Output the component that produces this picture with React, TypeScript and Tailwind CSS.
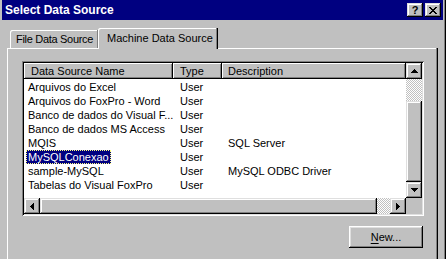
import React from "react";

const rows: [string, string, string][] = [
  ["Arquivos do Excel", "User", ""],
  ["Arquivos do FoxPro - Word", "User", ""],
  ["Banco de dados do Visual F...", "User", ""],
  ["Banco de dados MS Access", "User", ""],
  ["MQIS", "User", "SQL Server"],
  ["MySQLConexao", "User", ""],
  ["sample-MySQL", "User", "MySQL ODBC Driver"],
  ["Tabelas do Visual FoxPro", "User", ""],
];

// pixel triangles, drawn as rows of rects
const Arrow = ({ dir }: { dir: "up" | "down" | "left" | "right" }) => {
  const vertical = dir === "up" || dir === "down";
  const rects = [0, 1, 2, 3].map((i) => {
    const step = dir === "up" || dir === "left" ? i : 3 - i;
    const len = step * 2 + 1;
    const off = 3 - step;
    return vertical ? (
      <rect key={i} x={off} y={i} width={len} height={1} />
    ) : (
      <rect key={i} x={i} y={off} width={1} height={len} />
    );
  });
  return (
    <svg width={vertical ? 7 : 4} height={vertical ? 4 : 7} shapeRendering="crispEdges" fill="#000">
      {rects}
    </svg>
  );
};

const CloseGlyph = () => {
  const pattern = ["xx....xx", ".xx..xx.", "..xxxx..", "...xx...", "..xxxx..", ".xx..xx.", "xx....xx"];
  return (
    <svg width={8} height={7} shapeRendering="crispEdges" fill="#000">
      {pattern.flatMap((line, y) =>
        line.split("").map((c, x) => (c === "x" ? <rect key={`${x}-${y}`} x={x} y={y} width={1} height={1} /> : null))
      )}
    </svg>
  );
};

const ScrollBtn = ({ dir }: { dir: "up" | "down" | "left" | "right" }) => (
  <div className="w-[16px] h-[16px] flex-none flex items-center justify-center bg-[#c0c0c0] shadow-[inset_-1px_-1px_#000,inset_1px_1px_#dfdfdf,inset_-2px_-2px_#808080,inset_2px_2px_#fff]">
    <Arrow dir={dir} />
  </div>
);

export default function App() {
  return (
    <div className="w-[446px] h-[259px] bg-[#c0c0c0] flex overflow-hidden font-['Liberation_Sans',Arial,sans-serif] text-[11px] text-black select-none">
      <div className="flex-1 pl-[2px] flex flex-col">
        {/* title bar */}
        <div className="h-[20px] flex-none bg-[#000080] flex items-center pl-[3px] pr-[2px]">
          <span className="text-white font-bold text-[12px] leading-none">Select Data Source</span>
          <div className="ml-auto w-[16px] h-[14px] flex items-center justify-center bg-[#c0c0c0] font-bold text-[11px] leading-none shadow-[inset_-1px_-1px_#000,inset_1px_1px_#dfdfdf,inset_-2px_-2px_#808080,inset_2px_2px_#fff]">
            ?
          </div>
          <div className="ml-[2px] w-[16px] h-[14px] flex items-center justify-center bg-[#c0c0c0] shadow-[inset_-1px_-1px_#000,inset_1px_1px_#dfdfdf,inset_-2px_-2px_#808080,inset_2px_2px_#fff]">
            <CloseGlyph />
          </div>
        </div>

        <div className="flex-1 flex flex-col pl-[5px] pt-[8px]">
          {/* tabs */}
          <div className="relative z-10 h-[20px] flex-none flex items-end pl-[3px]">
            <div className="w-[89px] h-[18px] pl-[6px] leading-[18px] tracking-[-0.3px] whitespace-nowrap rounded-tl-[2px] shadow-[inset_-1px_0_#000,inset_-2px_0_#808080,inset_1px_1px_#fff]">
              File Data Source
            </div>
            <div className="w-[120px] h-[21px] -mb-[1px] -ml-[1px] pl-[9px] pt-[2px] leading-[16px] whitespace-nowrap bg-[#c0c0c0] rounded-tl-[2px] shadow-[inset_-1px_0_#000,inset_-2px_0_#808080,inset_1px_1px_#fff]">
              Machine Data Source
            </div>
          </div>

          {/* panel */}
          <div className="w-[431px] flex-1 pl-[15px] pt-[13px] shadow-[inset_-1px_0_#000,inset_-2px_0_#808080,inset_1px_1px_#fff]">
            {/* list view */}
            <div className="w-[402px] h-[155px] p-[2px] bg-white shadow-[inset_1px_1px_#808080,inset_-1px_-1px_#fff,inset_2px_2px_#000,inset_-2px_-2px_#dfdfdf]">
              <div className="h-full flex flex-col">
                <div className="flex-1 flex min-h-0">
                  <div className="flex-1 flex flex-col bg-white overflow-hidden">
                    <div className="h-[16px] flex-none flex bg-[#c0c0c0] leading-[16px]">
                      <div className="w-[149px] pl-[7px] shadow-[inset_-1px_-1px_#000,inset_1px_1px_#fff,inset_-2px_-2px_#808080]">
                        Data Source Name
                      </div>
                      <div className="w-[49px] pl-[7px] shadow-[inset_-1px_-1px_#000,inset_1px_1px_#fff,inset_-2px_-2px_#808080]">
                        Type
                      </div>
                      <div className="flex-1 pl-[6px] shadow-[inset_-1px_-1px_#000,inset_1px_1px_#fff,inset_-2px_-2px_#808080]">
                        Description
                      </div>
                    </div>
                    <div className="pt-[1px]">
                      {rows.map(([name, type, desc]) => (
                        <div key={name} className="h-[14px] flex leading-[14px] whitespace-nowrap">
                          <div className="w-[149px] pl-[2px]">
                            {name === "MySQLConexao" ? (
                              <span className="inline-block h-[14px] px-[1px] bg-[#000080] text-white border border-dotted border-[#ffff80] leading-[12px]">
                                {name}
                              </span>
                            ) : (
                              <span className="px-[2px]">{name}</span>
                            )}
                          </div>
                          <div className="w-[49px] pl-[7px]">{type}</div>
                          <div className="flex-1 pl-[6px]">{desc}</div>
                        </div>
                      ))}
                    </div>
                  </div>
                  {/* vertical scrollbar */}
                  <div className="w-[16px] flex-none flex flex-col bg-[#c0c0c0]">
                    <ScrollBtn dir="up" />
                    <div className="h-[22px] flex-none bg-[image:repeating-conic-gradient(#c0c0c0_0_25%,#fff_0_50%)] bg-[length:2px_2px]" />
                    <div className="flex-1 bg-[#c0c0c0] shadow-[inset_-1px_-1px_#000,inset_1px_1px_#dfdfdf,inset_-2px_-2px_#808080,inset_2px_2px_#fff]" />
                    <ScrollBtn dir="down" />
                  </div>
                </div>
                {/* horizontal scrollbar */}
                <div className="h-[16px] flex-none flex bg-[#c0c0c0]">
                  <ScrollBtn dir="left" />
                  <div className="w-[337px] bg-[#c0c0c0] shadow-[inset_-1px_-1px_#000,inset_1px_1px_#dfdfdf,inset_-2px_-2px_#808080,inset_2px_2px_#fff]" />
                  <div className="w-[13px] bg-[image:repeating-conic-gradient(#c0c0c0_0_25%,#fff_0_50%)] bg-[length:2px_2px]" />
                  <ScrollBtn dir="right" />
                  <div className="w-[16px] bg-[#c0c0c0]" />
                </div>
              </div>
            </div>

            <div className="pt-[10px] pl-[327px]">
              <div className="w-[74px] h-[22px] flex items-center justify-center bg-[#c0c0c0] shadow-[inset_-1px_-1px_#000,inset_1px_1px_#fff,inset_-2px_-2px_#808080,inset_2px_2px_#dfdfdf]">
                <span>
                  <span className="underline underline-offset-[2px]">N</span>ew...
                </span>
              </div>
            </div>
          </div>
        </div>
      </div>
      <div className="w-[1px] bg-[#c0c0c0]" />
      <div className="w-[1px] bg-[#808080]" />
      <div className="w-[1px] bg-black" />
    </div>
  );
}
